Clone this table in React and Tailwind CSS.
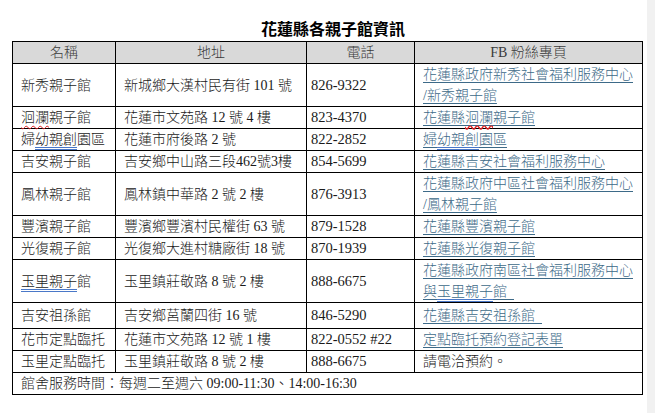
const font = { fontFamily: '"Liberation Serif", "Noto Sans CJK TC", serif' };

const wavy = 'underline decoration-wavy decoration-[#e02020] underline-offset-[3px] decoration-1';
const dbl = 'underline decoration-double decoration-[#4a78c8] underline-offset-[3px] decoration-1';

function Link({ children }) {
  return (
    <span className="text-[#3d6a88] underline decoration-[#3d6a88] underline-offset-[3px] decoration-1">
      {children}
    </span>
  );
}

const rows = [
  {
    name: '新秀親子館',
    addr: '新城鄉大漢村民有街 101 號',
    tel: '826-9322',
    fb: (
      <>
        <Link>花蓮縣政府新秀社會福利服務中心</Link>
        <br />
        <Link>/新秀親子館</Link>
      </>
    ),
  },
  {
    name: (
      <>
        <span className={wavy}>洄瀾</span>親子館
      </>
    ),
    addr: '花蓮市文苑路 12 號 4 樓',
    tel: '823-4370',
    fb: (
      <Link>
        花蓮縣<span className="underline decoration-wavy decoration-[#e02020] underline-offset-[3px]">洄瀾</span>親子館
      </Link>
    ),
  },
  {
    name: (
      <>
        婦<span className={dbl}>幼親創</span>園區
      </>
    ),
    addr: '花蓮市府後路 2 號',
    tel: '822-2852',
    fb: (
      <Link>
        婦<span className="underline decoration-double decoration-[#4a78c8] underline-offset-[3px]">幼親創</span>園區
      </Link>
    ),
  },
  {
    name: '吉安親子館',
    addr: '吉安鄉中山路三段462號3樓',
    tel: '854-5699',
    fb: <Link>花蓮縣吉安社會福利服務中心</Link>,
  },
  {
    name: '鳳林親子館',
    addr: '鳳林鎮中華路 2 號 2 樓',
    tel: '876-3913',
    fb: (
      <>
        <Link>花蓮縣政府中區社會福利服務中心</Link>
        <br />
        <Link>/鳳林親子館</Link>
      </>
    ),
  },
  {
    name: '豐濱親子館',
    addr: '豐濱鄉豐濱村民權街 63 號',
    tel: '879-1528',
    fb: <Link>花蓮縣豐濱親子館</Link>,
  },
  {
    name: '光復親子館',
    addr: '光復鄉大進村糖廠街 18 號',
    tel: '870-1939',
    fb: <Link>花蓮縣光復親子館</Link>,
  },
  {
    name: (
      <>
        <span className={dbl}>玉里親子</span>館
      </>
    ),
    addr: '玉里鎮莊敬路 8 號 2 樓',
    tel: '888-6675',
    fb: (
      <>
        <Link>花蓮縣政府南區社會福利服務中心</Link>
        <br />
        <Link>
          與<span className="underline decoration-double decoration-[#4a78c8] underline-offset-[3px]">玉里親子</span>館&nbsp;&nbsp;
        </Link>
      </>
    ),
  },
  {
    name: '吉安祖孫館',
    addr: '吉安鄉莒蘭四街 16 號',
    tel: '846-5290',
    fb: <Link>花蓮縣吉安祖孫館&nbsp;&nbsp;</Link>,
    tall: true,
  },
  {
    name: '花市定點臨托',
    addr: '花蓮市文苑路 12 號 1 樓',
    tel: '822-0552 #22',
    fb: <Link>定點臨托預約登記表單</Link>,
  },
  {
    name: '玉里定點臨托',
    addr: '玉里鎮莊敬路 8 號 2 樓',
    tel: '888-6675',
    fb: <span>請電洽預約。</span>,
  },
];

export default function App() {
  return (
    <div className="flex h-[413px] w-[655px] bg-white text-[#1a1a1a]" style={font}>
      <div className="flex-1 pl-[12px]">
        {/* Title */}
        <div className="w-[630px] pl-3 pt-[19px] text-center text-[16px] font-bold leading-[22px] text-black">
          花蓮縣各親子館資訊
        </div>

        <table className="w-[630px] table-fixed border-collapse text-[14px] font-light leading-[21px]">
          <colgroup>
            <col className="w-[103px]" />
            <col className="w-[191px]" />
            <col className="w-[108px]" />
            <col className="w-[228px]" />
          </colgroup>
          <thead>
            <tr className="bg-[#d9d9d9] text-[#3a3a3a]">
              <th className="border border-black p-0 font-light">名稱</th>
              <th className="border border-black p-0 font-light">地址</th>
              <th className="border border-black p-0 font-light">電話</th>
              <th className="border border-black p-0 font-light">FB 粉絲專頁</th>
            </tr>
          </thead>
          <tbody>
            {rows.map((r, i) => (
              <tr key={i} className={r.tall ? 'h-[26px]' : ''}>
                <td className="whitespace-nowrap border border-black py-0 pl-[8px] align-middle">{r.name}</td>
                <td className="whitespace-nowrap border border-black py-0 pl-[8px] align-middle">{r.addr}</td>
                <td className="whitespace-nowrap border border-black py-0 pl-[4px] align-middle text-[14.5px]">{r.tel}</td>
                <td className="whitespace-nowrap border border-black py-0 pl-[8px] align-middle">{r.fb}</td>
              </tr>
            ))}
            <tr>
              <td colSpan={4} className="border border-black py-0 pl-[8px]">
                館舍服務時間：每週二至週六 09:00-11:30、14:00-16:30
              </td>
            </tr>
          </tbody>
        </table>
      </div>
      <div className="w-[8px] bg-[#f1f1f1]" />
    </div>
  );
}
